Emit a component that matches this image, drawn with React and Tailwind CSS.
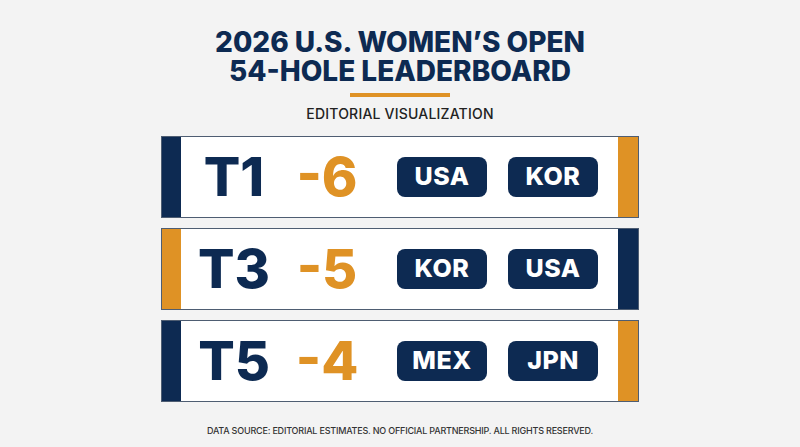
import React from 'react';

const NAVY = 'bg-[#0d2a52]';
const GOLD = 'bg-[#df9225]';

const rows = [
    { rank: 'T1', score: '-6', teams: ['USA', 'KOR'], left: NAVY, right: GOLD },
    { rank: 'T3', score: '-5', teams: ['KOR', 'USA'], left: GOLD, right: NAVY },
    { rank: 'T5', score: '-4', teams: ['MEX', 'JPN'], left: NAVY, right: GOLD },
];

const Pill = ({ label }) => (
    <div className="w-[90px] h-[40px] rounded-[8px] bg-[#0d2a52] flex items-center justify-center text-white text-[25px] font-extrabold tracking-[0.5px]">
        {label}
    </div>
);

const Row = ({ rank, score, teams, left, right }) => (
    <div className="flex h-[82px] bg-white border border-[#4e5d72]">
        <div className={`w-[19px] ${left}`} />
        <div className="flex flex-1 items-center">
            <div className="w-[106px] text-center text-[54px] leading-none font-extrabold text-[#0d2a52]">{rank}</div>
            <div className="w-[80px] text-center text-[54px] leading-none font-extrabold text-[#df9225]">{score}</div>
            <div className="flex gap-[21px] ml-[30px]">
                {teams.map((t, i) => (
                    <Pill key={i} label={t} />
                ))}
            </div>
        </div>
        <div className={`w-[20px] ${right}`} />
    </div>
);

export default function App() {
    return (
        <div
            className="w-[800px] h-[447px] bg-[#f3f3f3] flex flex-col items-center"
            style={{ fontFamily: 'Inter, "Noto Sans", sans-serif' }}
        >
            <div className="mt-[28px] text-center text-[28px] leading-[29px] font-extrabold text-[#0d2a52]">
                <div>2026 U.S. WOMEN’S OPEN</div>
                <div>54-HOLE LEADERBOARD</div>
            </div>
            <div className="mt-[7px] w-[100px] h-[4px] bg-[#df9225]" />
            <div className="mt-[9px] text-[14px] leading-[16px] font-medium text-[#222] tracking-[0.2px]">
                EDITORIAL VISUALIZATION
            </div>
            <div className="mt-[14px] w-[478px] flex flex-col gap-[10px]">
                {rows.map((r, i) => (
                    <Row key={i} {...r} />
                ))}
            </div>
            <div className="mt-[23px] text-[9px] leading-[11px] font-medium text-[#333] tracking-[-0.2px]">
                DATA SOURCE: EDITORIAL ESTIMATES. NO OFFICIAL PARTNERSHIP. ALL RIGHTS RESERVED.
            </div>
        </div>
    );
}
